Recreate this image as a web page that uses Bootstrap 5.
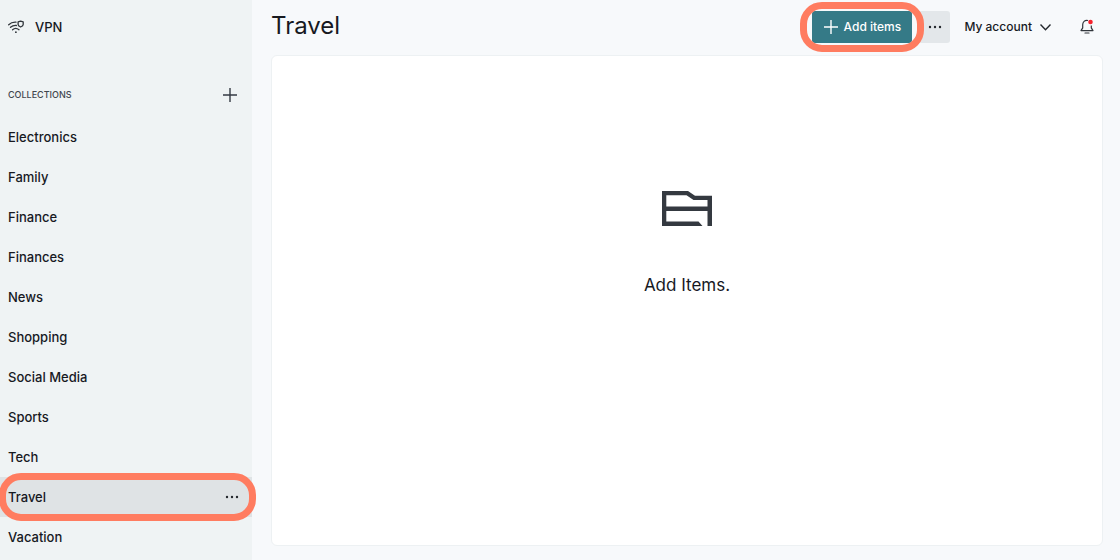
<!DOCTYPE html>
<html lang="en">
<head>
<meta charset="utf-8">
<meta name="viewport" content="width=device-width, initial-scale=1">
<title>Travel</title>
<link href="https://cdn.jsdelivr.net/npm/bootstrap@5.3.0/dist/css/bootstrap.min.css" rel="stylesheet">
<style>
  body { font-family: Inter, "Liberation Sans", sans-serif; font-size: 13px; line-height: 20px; font-weight: 500; color: #17191f; background: #f7f9fb; }
  svg { display: block; flex: none; }
  .sidebar { width: 252px; background: #eff3f4; }
  .vpn-link { height: 54px; padding-left: 8px; gap: 11px; }
  .collections-head { height: 40px; margin-top: 21px; margin-bottom: 2px; padding: 0 15px 0 8px; }
  .collections-head h2 { font-size: 9px; line-height: 12px; color: #41464e; }
  .entry { height: 40px; padding: 0 13px 0 8px; }
  .entry.current { background: #dfe3e5; }
  .plain { border: 0; padding: 0; background: none; color: inherit; font-weight: 500; }
  .highlight { position: relative; }
  .highlight::after { content: ""; position: absolute; z-index: 2; border: 7px solid #ff7c60; border-radius: 22px; pointer-events: none; }
  .entry.highlight::after { inset: -4px -4px -4px -1px; }
  .add-wrap.highlight::after { inset: -9px -12px; }
  .topbar { height: 54px; padding: 0 26px 0 19px; }
  .topbar h1 { font-size: 24px; line-height: 32px; font-weight: 400; margin: 0 auto 2px 0; }
  .add-btn, .more-btn { height: 32px; font-size: 12px; border-radius: 3px; }
  .add-btn, .add-btn:hover { width: 100px; background: #357a87; color: #fff; }
  .more-btn { width: 31px; margin-left: 7px; background: #e3e7ea; }
  .account { font-size: 12px; margin-left: 14px; }
  .bell { margin-left: 29px; }
  .panel { margin: 1px 17px 14px 19px; background: #fff; border: 1px solid #edf1f3; border-radius: 6px; padding-top: 127px; }
  .panel p { font-size: 17px; line-height: 24px; font-weight: 400; margin-top: 46px; }
</style>
</head>
<body>
<div class="d-flex min-vh-100">
  <aside class="sidebar flex-shrink-0">
    <a href="#" class="vpn-link d-flex align-items-center text-reset text-decoration-none">
      <svg width="16" height="14" viewBox="0 0 16 14" fill="none" stroke="#30353b" stroke-width="1.300" stroke-linecap="round">
        <path d="M.7 4.700C2.800 2.700 5.300 2 8 2.200M2.500 7.300C4.100 5.900 6.200 5.300 8.400 5.500M4.600 9.700C6.300 8.200 9 8.100 11 9.700"/>
        <path d="M12.600 1.100l2.600.8v2.500c0 1.200-1.200 2-2.600 2.600-1.400-.6-2.500-1.400-2.500-2.600V1.900z" stroke-linejoin="round"/>
        <circle cx="7.900" cy="12.200" r=".9" fill="#30353b" stroke="none"/>
      </svg>
      <span>VPN</span>
    </a>
    <div class="collections-head d-flex align-items-center justify-content-between">
      <h2 class="m-0 text-uppercase">Collections</h2>
      <button class="plain" type="button" aria-label="Add collection">
        <svg width="14" height="14" viewBox="0 0 14 14" stroke="#353a43" stroke-width="1.400"><path d="M7 0v14M0 7h14"/></svg>
      </button>
    </div>
    <nav class="d-flex flex-column" aria-label="Collections">
      <a href="#" class="entry d-flex align-items-center text-reset text-decoration-none">Electronics</a>
      <a href="#" class="entry d-flex align-items-center text-reset text-decoration-none">Family</a>
      <a href="#" class="entry d-flex align-items-center text-reset text-decoration-none">Finance</a>
      <a href="#" class="entry d-flex align-items-center text-reset text-decoration-none">Finances</a>
      <a href="#" class="entry d-flex align-items-center text-reset text-decoration-none">News</a>
      <a href="#" class="entry d-flex align-items-center text-reset text-decoration-none">Shopping</a>
      <a href="#" class="entry d-flex align-items-center text-reset text-decoration-none">Social Media</a>
      <a href="#" class="entry d-flex align-items-center text-reset text-decoration-none">Sports</a>
      <a href="#" class="entry d-flex align-items-center text-reset text-decoration-none">Tech</a>
      <div class="entry current highlight d-flex align-items-center justify-content-between">
        <a href="#" class="text-reset text-decoration-none" aria-current="page">Travel</a>
        <button class="plain" type="button" aria-label="Travel options">
          <svg width="14" height="4" viewBox="0 0 14 4" fill="#23272d"><circle cx="2" cy="2" r="1.200"/><circle cx="7" cy="2" r="1.200"/><circle cx="12" cy="2" r="1.200"/></svg>
        </button>
      </div>
      <a href="#" class="entry d-flex align-items-center text-reset text-decoration-none">Vacation</a>
    </nav>
  </aside>
  <main class="d-flex flex-column flex-grow-1">
    <header class="topbar d-flex align-items-center">
      <h1>Travel</h1>
      <div class="add-wrap highlight">
        <button class="btn add-btn border-0 p-0 fw-medium d-flex align-items-center justify-content-center" type="button">
          <svg class="me-1" width="16" height="14" viewBox="0 0 16 14" stroke="#fff" stroke-width="1.400"><path d="M7 0v14M0 7h14"/></svg>
          Add items
        </button>
      </div>
      <button class="plain more-btn d-flex align-items-center justify-content-center" type="button" aria-label="More">
        <svg width="14" height="4" viewBox="0 0 14 4" fill="#23272d"><circle cx="2" cy="2" r="1.200"/><circle cx="7" cy="2" r="1.200"/><circle cx="12" cy="2" r="1.200"/></svg>
      </button>
      <button class="plain account d-flex align-items-center gap-2" type="button">
        My account
        <svg width="11" height="7" viewBox="0 0 11 7" fill="none" stroke="#23272d" stroke-width="1.400"><path d="M.5.500l5 5.200 5-5.200"/></svg>
      </button>
      <button class="plain bell" type="button" aria-label="Notifications">
        <svg width="14" height="16" viewBox="0 0 14 16" fill="none" stroke="#30353b" stroke-width="1.200">
          <path d="M8 1.500C4.600.8 2.700 3 2.700 5.700v3.200L1 11.600h12l-1.700-2.700V6.500" stroke-linejoin="round"/><path d="M5 14h4" stroke-linecap="round"/>
          <circle cx="10.500" cy="3" r="2.300" fill="#f5222d" stroke="none"/>
        </svg>
      </button>
    </header>
    <section class="panel flex-grow-1 d-flex flex-column align-items-center">
      <svg width="52" height="44" viewBox="0 0 52 44" fill="#343940">
        <path fill-rule="evenodd" d="M1 8H27L34 12.700H51V43H46.500V28H5.300V38.500H37.500L41.500 43H1ZM5.300 12.300V23.500H46.500V17H32.500L25.500 12.300Z"/>
      </svg>
      <p class="mb-0">Add Items.</p>
    </section>
  </main>
</div>
<script src="https://cdn.jsdelivr.net/npm/bootstrap@5.3.0/dist/js/bootstrap.bundle.min.js"></script>
</body>
</html>
